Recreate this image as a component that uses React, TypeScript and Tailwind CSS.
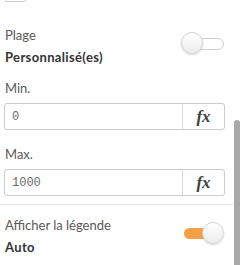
import React from 'react';

function Toggle({ on }: { on: boolean }) {
  return (
    <div className="relative h-[23px] w-[44px] shrink-0">
      <div
        className={
          on
            ? 'absolute left-[3px] top-[6px] h-[11px] w-[36px] rounded-full bg-[#f5a048]'
            : 'absolute left-[3px] top-[6px] h-[12px] w-[40px] rounded-full border border-[#cfcfcf] bg-white'
        }
      />
      <div
        className={
          'absolute top-0 h-[22px] w-[22px] rounded-full border border-[#d4d4d4] bg-gradient-to-b from-white to-[#ececec] shadow-[0_1px_2px_rgba(0,0,0,0.15)] ' +
          (on ? 'left-[21px]' : 'left-0')
        }
      />
    </div>
  );
}

function FxInput({ value }: { value: string }) {
  return (
    <div className="flex h-[27px] w-[221px] rounded-[3px] border border-[#cccccc] bg-white">
      <div className="flex flex-1 items-center pl-[7px] font-['Liberation_Mono',monospace] text-[12px] text-[#6b6b6b]">
        {value}
      </div>
      <div className="flex w-[42px] items-center justify-center border-l border-[#d6d6d6] font-['Liberation_Serif',serif] text-[17px] font-bold italic text-[#404040]">
        fx
      </div>
    </div>
  );
}

function Setting({ label, value, gap }: { label: string; value: string; gap: string }) {
  return (
    <div className="flex flex-col">
      <span className="text-[13px] leading-[16px] text-[#595959]">{label}</span>
      <span className={gap + ' text-[13px] font-bold leading-[16px] tracking-[0.35px] text-[#333333]'}>{value}</span>
    </div>
  );
}

export default function App() {
  return (
    <div className="flex h-[265px] w-[240px] overflow-hidden bg-white font-['Lato',sans-serif]">
      <div className="flex w-[234px] flex-col">
        <div className="ml-[5px] h-[2px] w-[21px] rounded-b-[3px] border-x border-b border-[#cfcfcf]" />

        <div className="mt-[25px] flex items-start justify-between pl-[5px] pr-[9px]">
          <Setting label="Plage" value="Personnalisé(es)" gap="mt-[6px]" />
          <div className="mt-[5px]">
            <Toggle on={false} />
          </div>
        </div>

        <div className="mt-[15px] flex flex-col gap-[7px] pl-[4px]">
          <span className="pl-[1px] text-[13px] leading-[16px] text-[#595959]">Min.</span>
          <FxInput value="0" />
        </div>

        <div className="mt-[16px] flex flex-col gap-[7px] pl-[4px]">
          <span className="pl-[1px] text-[13px] leading-[16px] text-[#595959]">Max.</span>
          <FxInput value="1000" />
        </div>

        <div className="mt-[8px] h-px w-[233px] bg-[#e3e3e3]" />

        <div className="mt-[12px] flex items-start justify-between pl-[5px] pr-[9px]">
          <Setting label="Afficher la légende" value="Auto" gap="mt-[6px]" />
          <div className="mt-[5px]">
            <Toggle on />
          </div>
        </div>
      </div>
      <div className="flex w-[6px] flex-col pt-[120px]">
        <div className="flex-1 rounded-t-[3px] bg-[#a8a8a8]" />
      </div>
    </div>
  );
}
